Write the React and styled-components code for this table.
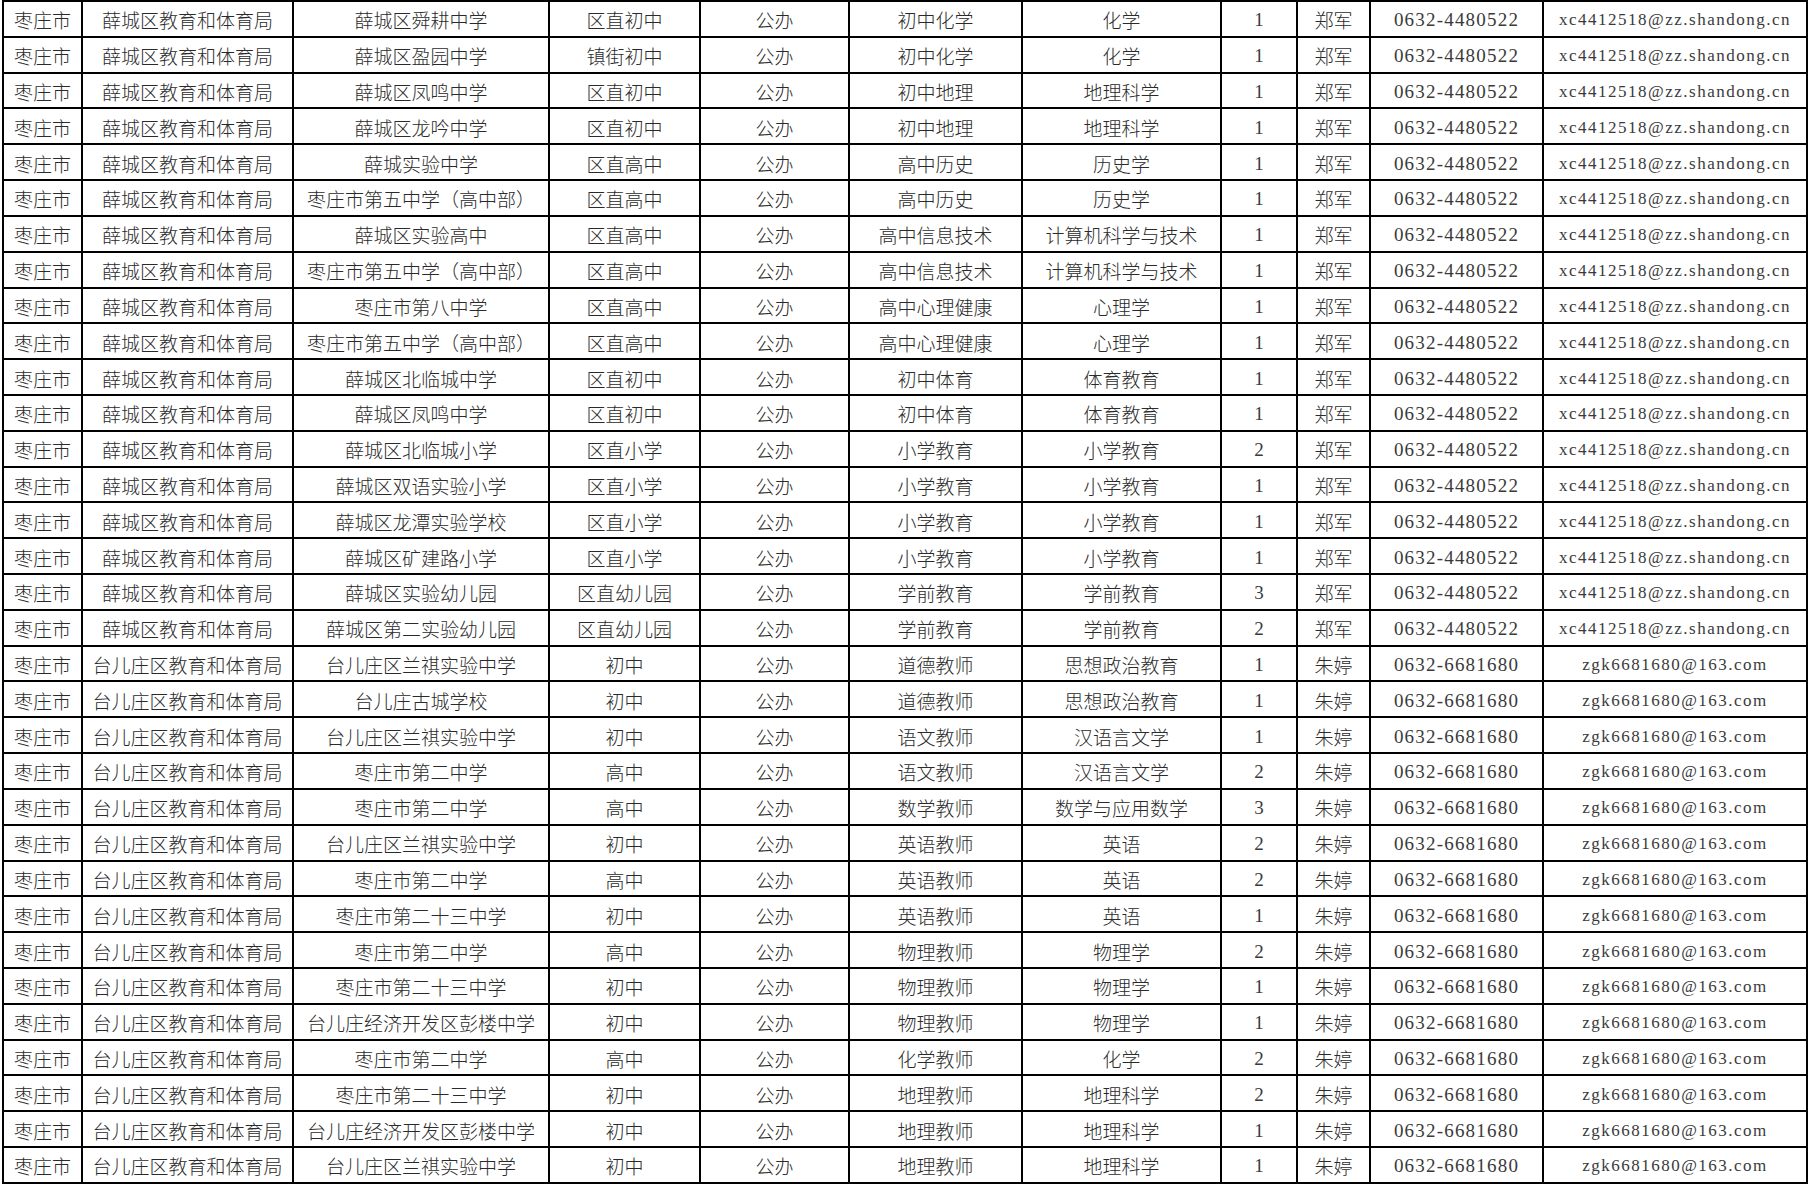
import React from "react";
import styled, { createGlobalStyle } from "styled-components";

const Global = createGlobalStyle`
  html, body { margin: 0; padding: 0; background: #fff; }
  body { overflow: hidden; }
  #root { width: 1814px; height: 1184px; }
`;

const COLS = "79px 211px 256px 151px 149px 173px 199px 76px 73px 173px 264px";

const Table = styled.div`
  box-sizing: border-box;
  margin-left: 2px;
  width: 1806px;
  height: 1184px;
  border-top: 2px solid #000;
  border-left: 2px solid #000;
  display: flex;
  flex-direction: column;
`;

const Row = styled.div`
  flex: 1 1 0;
  min-height: 0;
  display: grid;
  grid-template-columns: ${COLS};
`;

const Cell = styled.div`
  box-sizing: border-box;
  border-right: 2px solid #000;
  border-bottom: 2px solid #000;
  display: flex;
  align-items: center;
  justify-content: center;
  white-space: nowrap;
  overflow: hidden;
  padding-top: ${(p) => (p.$kind === "cjk" ? "2px" : "3px")};
  color: ${(p) => (p.$kind === "cjk" ? "#2a2a2a" : "#3a3a3a")};
  font-family: ${(p) =>
    p.$kind === "cjk"
      ? '"Noto Sans CJK SC", sans-serif'
      : '"Liberation Serif", "Noto Sans CJK SC", serif'};
  font-weight: ${(p) => (p.$kind === "cjk" ? 300 : 400)};
  font-size: ${(p) => (p.$kind === "email" ? "17px" : "19px")};
  letter-spacing: ${(p) =>
    p.$kind === "phone" ? "1.2px" : p.$kind === "email" ? "1.5px" : "0"};
`;

const XC = ["枣庄市", "薛城区教育和体育局", "公办", "郑军", "0632-4480522", "xc4412518@zz.shandong.cn"];
const TEZ = ["枣庄市", "台儿庄区教育和体育局", "公办", "朱婷", "0632-6681680", "zgk6681680@163.com"];

const xc = [
  ["薛城区舜耕中学", "区直初中", "初中化学", "化学", 1],
  ["薛城区盈园中学", "镇街初中", "初中化学", "化学", 1],
  ["薛城区凤鸣中学", "区直初中", "初中地理", "地理科学", 1],
  ["薛城区龙吟中学", "区直初中", "初中地理", "地理科学", 1],
  ["薛城实验中学", "区直高中", "高中历史", "历史学", 1],
  ["枣庄市第五中学（高中部）", "区直高中", "高中历史", "历史学", 1],
  ["薛城区实验高中", "区直高中", "高中信息技术", "计算机科学与技术", 1],
  ["枣庄市第五中学（高中部）", "区直高中", "高中信息技术", "计算机科学与技术", 1],
  ["枣庄市第八中学", "区直高中", "高中心理健康", "心理学", 1],
  ["枣庄市第五中学（高中部）", "区直高中", "高中心理健康", "心理学", 1],
  ["薛城区北临城中学", "区直初中", "初中体育", "体育教育", 1],
  ["薛城区凤鸣中学", "区直初中", "初中体育", "体育教育", 1],
  ["薛城区北临城小学", "区直小学", "小学教育", "小学教育", 2],
  ["薛城区双语实验小学", "区直小学", "小学教育", "小学教育", 1],
  ["薛城区龙潭实验学校", "区直小学", "小学教育", "小学教育", 1],
  ["薛城区矿建路小学", "区直小学", "小学教育", "小学教育", 1],
  ["薛城区实验幼儿园", "区直幼儿园", "学前教育", "学前教育", 3],
  ["薛城区第二实验幼儿园", "区直幼儿园", "学前教育", "学前教育", 2],
];

const tez = [
  ["台儿庄区兰祺实验中学", "初中", "道德教师", "思想政治教育", 1],
  ["台儿庄古城学校", "初中", "道德教师", "思想政治教育", 1],
  ["台儿庄区兰祺实验中学", "初中", "语文教师", "汉语言文学", 1],
  ["枣庄市第二中学", "高中", "语文教师", "汉语言文学", 2],
  ["枣庄市第二中学", "高中", "数学教师", "数学与应用数学", 3],
  ["台儿庄区兰祺实验中学", "初中", "英语教师", "英语", 2],
  ["枣庄市第二中学", "高中", "英语教师", "英语", 2],
  ["枣庄市第二十三中学", "初中", "英语教师", "英语", 1],
  ["枣庄市第二中学", "高中", "物理教师", "物理学", 2],
  ["枣庄市第二十三中学", "初中", "物理教师", "物理学", 1],
  ["台儿庄经济开发区彭楼中学", "初中", "物理教师", "物理学", 1],
  ["枣庄市第二中学", "高中", "化学教师", "化学", 2],
  ["枣庄市第二十三中学", "初中", "地理教师", "地理科学", 2],
  ["台儿庄经济开发区彭楼中学", "初中", "地理教师", "地理科学", 1],
  ["台儿庄区兰祺实验中学", "初中", "地理教师", "地理科学", 1],
];

const rows = [
  ...xc.map((r) => [XC, r]),
  ...tez.map((r) => [TEZ, r]),
];

export default function App() {
  return (
    <>
      <Global />
      <Table>
        {rows.map(([base, [school, type, post, major, n]], i) => (
          <Row key={i}>
            <Cell $kind="cjk">{base[0]}</Cell>
            <Cell $kind="cjk">{base[1]}</Cell>
            <Cell $kind="cjk">{school}</Cell>
            <Cell $kind="cjk">{type}</Cell>
            <Cell $kind="cjk">{base[2]}</Cell>
            <Cell $kind="cjk">{post}</Cell>
            <Cell $kind="cjk">{major}</Cell>
            <Cell $kind="num">{n}</Cell>
            <Cell $kind="cjk">{base[3]}</Cell>
            <Cell $kind="phone">{base[4]}</Cell>
            <Cell $kind="email">{base[5]}</Cell>
          </Row>
        ))}
      </Table>
    </>
  );
}
